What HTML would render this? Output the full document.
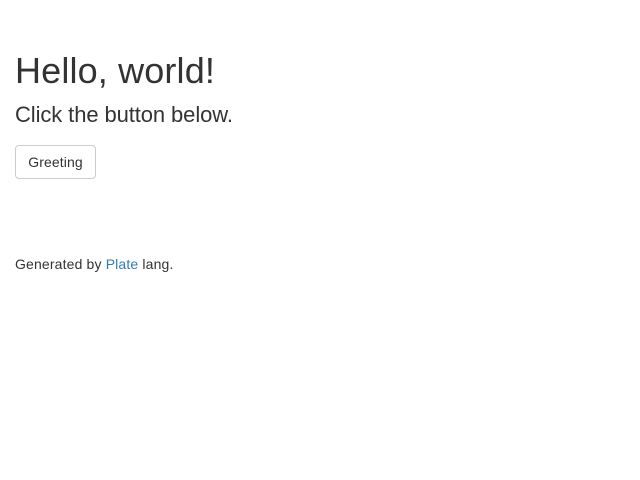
<!DOCTYPE html>
<html><head><meta charset="utf-8"><style>
body{margin:0;background:#fff;font-family:"Liberation Sans",Helvetica,Arial,sans-serif;color:#333;}
.a{position:absolute;left:15px;line-height:1;white-space:nowrap;margin:0}
.btn{position:absolute;left:15px;top:145px;width:79px;height:32px;border:1px solid #ccc;border-radius:4px;background:#fff;}
.btn span{position:absolute;left:0;right:0;top:9px;text-align:center;font-size:14px;line-height:1;color:#333;letter-spacing:0.1px}
a{color:#337ab7;text-decoration:none}
</style></head><body>
<div class="a" style="top:52.5px;font-size:36px;letter-spacing:0.15px">Hello, world!</div>
<div class="a" style="top:103.5px;font-size:22px;letter-spacing:-0.1px">Click the button below.</div>
<div class="btn"><span>Greeting</span></div>
<div class="a" style="top:257px;font-size:14px;letter-spacing:0.15px">Generated by <a>Plate</a> lang.</div>
</body></html>
